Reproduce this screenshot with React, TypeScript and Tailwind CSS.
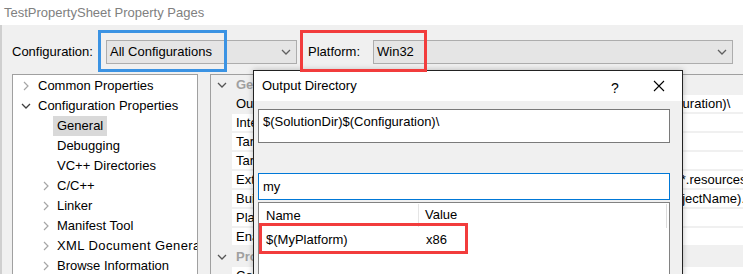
import React from 'react';

const font = { fontFamily: '"Liberation Sans", Arial, sans-serif' };

function ChevronRight({ className = '' }: { className?: string }) {
  return (
    <svg width="6" height="10" viewBox="0 0 6 10" className={className}>
      <polyline points="1,1 5,5 1,9" fill="none" stroke="currentColor" strokeWidth="1.2" />
    </svg>
  );
}

function ChevronDown({ className = '' }: { className?: string }) {
  return (
    <svg width="10" height="6" viewBox="0 0 10 6" className={className}>
      <polyline points="1,1 5,5 9,1" fill="none" stroke="currentColor" strokeWidth="1.3" />
    </svg>
  );
}

function Dropdown({ value, width }: { value: string; width: string }) {
  return (
    <div className={`${width} h-[24px] flex items-center justify-between border border-[#adadad] bg-[#e5e5e5] pl-[3px] pr-[5px]`}>
      <span>{value}</span>
      <ChevronDown className="text-[#606060]" />
    </div>
  );
}

type TreeItem = { label: string; level: 0 | 1; arrow?: 'right' | 'down'; selected?: boolean; wide?: boolean };

const treeItems: TreeItem[] = [
  { label: 'Common Properties', level: 0, arrow: 'right' },
  { label: 'Configuration Properties', level: 0, arrow: 'down' },
  { label: 'General', level: 1, selected: true },
  { label: 'Debugging', level: 1 },
  { label: 'VC++ Directories', level: 1 },
  { label: 'C/C++', level: 1, arrow: 'right' },
  { label: 'Linker', level: 1, arrow: 'right' },
  { label: 'Manifest Tool', level: 1, arrow: 'right' },
  { label: 'XML Document Generator', level: 1, arrow: 'right', wide: true },
  { label: 'Browse Information', level: 1, arrow: 'right' },
];

function TreeRow({ item }: { item: TreeItem }) {
  const arrow =
    item.arrow === 'right' ? (
      <ChevronRight className="text-[#a6a6a6]" />
    ) : item.arrow === 'down' ? (
      <ChevronDown className="text-[#404040]" />
    ) : null;

  if (item.level === 0) {
    return (
      <div className="h-[20px] flex items-center whitespace-nowrap">
        <div className="w-[25px] flex justify-center">{arrow}</div>
        <span>{item.label}</span>
      </div>
    );
  }
  return (
    <div className="h-[20px] flex items-center whitespace-nowrap">
      <div className="w-[26px] shrink-0" />
      <div className="w-[14px] shrink-0 flex justify-center">{arrow}</div>
      <span
        className={`h-[20px] leading-[20px] px-[4px] ${item.selected ? 'bg-[#d9d9d9]' : ''} ${item.wide ? 'tracking-[0.4px]' : ''}`}
      >
        {item.label}
      </span>
    </div>
  );
}

const generalRows: [string, string, string][] = [
  ['Output Directory', '$(SolutionDir)$(Configuration)\\', ''],
  ['Intermediate Directory', '$(Configuration)\\', ''],
  ['Target Name', '$(ProjectName)', ''],
  ['Target Extension', '.exe', ''],
  ['Extensions to Delete on Clean', '*.cdf;*.cache;*.obj;*.ilk;*.resources;*.tlb;*.tli;*.tlh', 'ml-[-4px]'],
  ['Build Log File', '$(IntDir)$(MSBuildProjectName).log', 'ml-[1px]'],
  ['Platform Toolset', 'v140', ''],
  ['Enable Managed Incremental Build', 'No', ''],
];

function CategoryRow({ label }: { label: string }) {
  return (
    <div className="h-[20px] flex items-center bg-[#f0f0f0] whitespace-nowrap">
      <div className="w-[21px] flex justify-center">
        <ChevronDown className="text-[#555]" />
      </div>
      <span className="pl-[4px] font-bold text-[#a0a0a0]">{label}</span>
    </div>
  );
}

function PropRow({ name, value, shift = '', selected = false }: { name: string; value: string; shift?: string; selected?: boolean }) {
  return (
    <div className="h-[19px] flex whitespace-nowrap">
      <div className="w-[21px] shrink-0 bg-[#f0f0f0]" />
      <div className="flex-1 flex bg-white border-b-2 border-[#f0f0f0] overflow-hidden">
        <div className={`w-[318px] shrink-0 pl-[4px] leading-[17px] ${selected ? 'bg-[#f0f0f0]' : ''}`}>{name}</div>
        <div className={`pl-[4px] leading-[17px] ${shift}`}>{value}</div>
      </div>
    </div>
  );
}

function OutputDialog() {
  return (
    <div className="absolute left-[253px] top-[70px] w-[430px] h-[220px] border border-[#222] bg-[#f0f0f0] shadow-[0_0_6px_rgba(0,0,0,0.25)] flex flex-col">
      <div className="h-[30px] bg-white flex items-center relative">
        <span className="pl-[8px]">Output Directory</span>
        <span className="absolute left-[357px] top-[7px] text-[14px]">?</span>
        <svg width="12" height="12" viewBox="0 0 12 12" className="absolute left-[399px] top-[9px]">
          <path d="M1 1 L11 11 M11 1 L1 11" stroke="#000" strokeWidth="1.1" />
        </svg>
      </div>
      <div className="pl-[4px] pt-[8px] flex flex-col">
        <div className="w-[412px] h-[34px] bg-white border border-[#7a7a7a] pl-[4px] pt-[3px] leading-[17px]">
          $(SolutionDir)$(Configuration)\
        </div>
        <div className="mt-[30px] w-[412px] h-[27px] bg-white border border-[#0078d7] pl-[4px] flex items-center">
          my
        </div>
        <div className="mt-[2px] w-[412px] h-[80px] bg-white border border-[#828282] relative">
          <div className="h-[24px] flex items-center">
            <div className="w-[160px] pl-[7px] border-r border-[#e5e5e5] h-[23px] leading-[23px]">Name</div>
            <div className="pl-[6px]">Value</div>
          </div>
          <div className="h-[26px] flex items-center">
            <div className="w-[160px] pl-[7px]">$(MyPlatform)</div>
            <div className="pl-[7px]">x86</div>
          </div>
          <div className="absolute right-[2px] top-[1px] w-[1px] h-[24px] bg-[#dcdcdc]" />
        </div>
      </div>
      <div className="absolute left-[5px] top-[152px] w-[209px] h-[31px] border-[3px] border-[#f23c3c]" />
    </div>
  );
}

export default function App() {
  return (
    <div className="w-[743px] h-[274px] relative overflow-hidden bg-[#f0f0f0] text-[13px] text-black flex flex-col" style={font}>
      <div className="h-[25px] bg-white pl-[4px] leading-[25px] text-[#808080] shrink-0">TestPropertySheet Property Pages</div>

      <div className="flex-1 flex flex-col border-l-2 border-[#cfcfcf] min-h-0">
        <div className="h-[49px] shrink-0 flex items-start pt-[15px] pl-[10px]">
          <div className="w-[94px] h-[24px] leading-[24px]">Configuration:</div>
          <Dropdown value="All Configurations" width="w-[191px]" />
          <div className="ml-[11px] w-[65px] h-[24px] leading-[24px]">Platform:</div>
          <Dropdown value="Win32" width="w-[360px]" />
        </div>

        <div className="flex-1 flex pl-[10px] min-h-0">
          <div className="w-[186px] shrink-0 h-[220px] bg-white border border-[#a0a0a0] pt-[1px] overflow-hidden">
            {treeItems.map((item) => (
              <TreeRow key={item.label} item={item} />
            ))}
          </div>
          <div className="ml-[12px] flex-1 h-[220px] border-l border-t border-[#a0a0a0] overflow-hidden">
            <CategoryRow label="General" />
            {generalRows.map(([n, v, s], i) => (
              <PropRow key={n} name={n} value={v} shift={s} selected={i === 0} />
            ))}
            <CategoryRow label="Project Defaults" />
            <PropRow name="Configuration Type" value="Application (.exe)" />
          </div>
        </div>
      </div>

      <OutputDialog />

      <div className="absolute left-[98px] top-[30px] w-[129px] h-[42px] border-[3px] border-[#3b93e3]" />
      <div className="absolute left-[300px] top-[30px] w-[127px] h-[42px] border-[3px] border-[#f23c3c]" />
    </div>
  );
}
